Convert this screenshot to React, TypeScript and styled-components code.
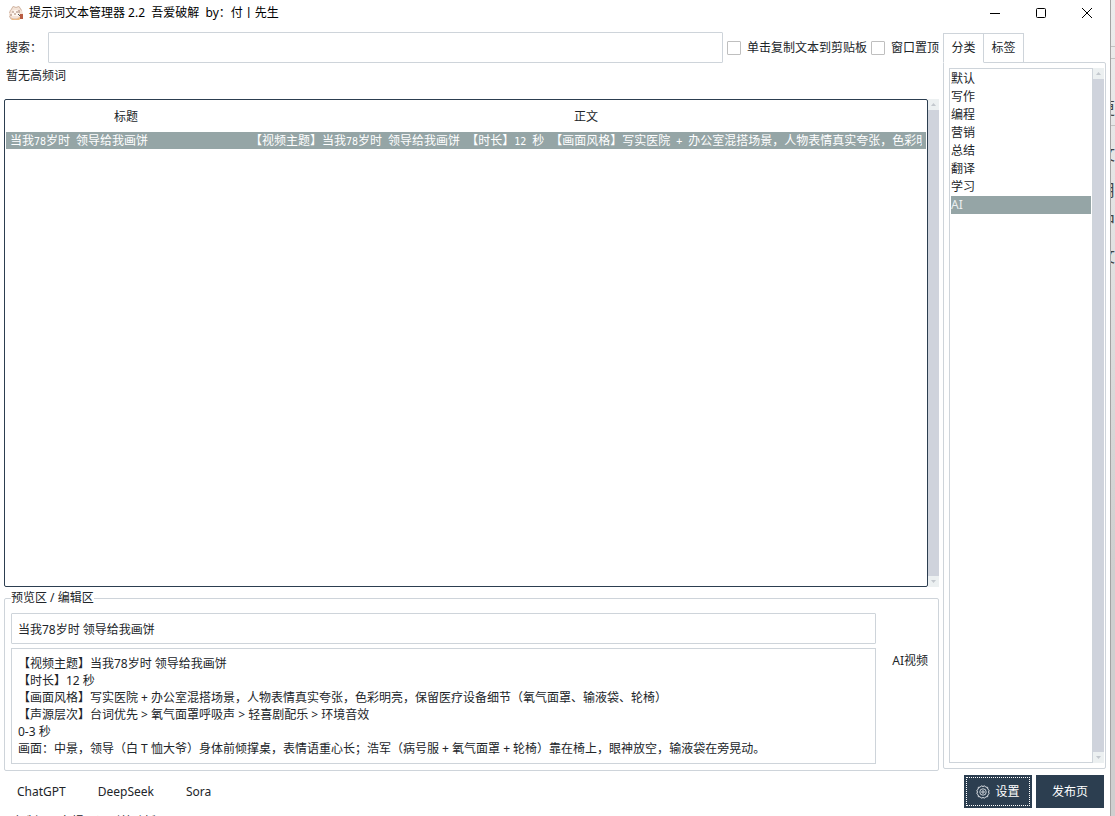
import React, { useState } from 'react';
import styled, { createGlobalStyle, css } from 'styled-components';

const line = '#ced4da';
const navy = '#2c3e50';
const sage = '#95a5a6';
const bar = '#cfd3dc';
const ink = '#212529';

const GlobalStyle = createGlobalStyle`
  * { box-sizing: border-box; }
  body {
    margin: 0;
    background: #fff;
    color: ${ink};
    font: 12px/16px "Noto Sans", "Noto Sans CJK SC", sans-serif;
    text-spacing-trim: space-all;
  }
  button, input, textarea { font: inherit; color: inherit; }
`;

const Page = styled.div`
  display: flex;
  height: 100vh;
  overflow: hidden;
`;

const Window = styled.div`
  flex: 1;
  min-width: 0;
  height: calc(100vh + 16px);
  display: flex;
  flex-direction: column;
  background: #fff;
`;

const Behind = styled.aside`
  width: 5px;
  overflow: hidden;
  border-left: 1px solid #a3a3a3;
  background: linear-gradient(#ececec, #e2e2e2 30%, #cfcfcf 70%, #cfcfcf);
  font-size: 16px;
  color: #444;
`;

const BehindRow = styled.div<{ $height: number; $ruled?: boolean }>`
  display: flex;
  justify-content: flex-end;
  align-items: center;
  height: ${(p) => p.$height}px;
  border-bottom: ${(p) => (p.$ruled ? '1px solid #c2c2c2' : '0')};
`;

const TitleBar = styled.header`
  display: flex;
  align-items: center;
  height: 25px;
  padding-left: 8px;
  color: #000;
`;

const Title = styled.h1`
  flex: 1;
  margin: 0 0 0 5px;
  font-size: 12px;
  font-weight: 400;
  white-space: pre;
`;

const WindowButton = styled.button`
  display: flex;
  align-items: center;
  justify-content: center;
  width: 46px;
  height: 25px;
  padding: 0;
  border: 0;
  background: none;
`;

const Main = styled.main`
  flex: 1;
  min-height: 0;
  display: flex;
  gap: 4px;
  padding: 7px 4px 0;
`;

const Workspace = styled.section`
  flex: 1;
  min-width: 0;
  display: flex;
  flex-direction: column;
`;

const SearchRow = styled.div`
  display: flex;
  align-items: center;
  gap: 4px;
`;

const SearchLabel = styled.label`
  width: 40px;
  padding-left: 2px;
  white-space: nowrap;
`;

const TextField = styled.input`
  flex: 1;
  min-width: 0;
  height: 31px;
  padding: 0 6px;
  border: 1px solid ${line};
  border-radius: 1px;
  background: #fff;
  outline: none;
`;

const TitleField = styled(TextField)`
  flex: none;
`;

const CheckLabel = styled.label`
  display: flex;
  align-items: center;
  gap: 6px;
  white-space: nowrap;
`;

const CheckBox = styled.input`
  appearance: none;
  width: 14px;
  height: 14px;
  margin: 0;
  border: 1px solid #bfbfbf;
  border-radius: 1px;
  background: #fff;
  &:checked { background: ${navy}; }
`;

const Keywords = styled.p`
  margin: 0 0 10px;
  padding-left: 2px;
  line-height: 26px;
`;

const Scrollable = styled.div`
  flex: 1;
  min-height: 0;
  display: flex;
`;

const TableFrame = styled.div`
  flex: 1;
  min-width: 0;
  padding: 1px;
  border: 1px solid ${navy};
  border-radius: 2px;
`;

const Table = styled.table`
  width: 100%;
  table-layout: fixed;
  border-collapse: collapse;
`;

const HeadCell = styled.th<{ $width?: number }>`
  width: ${(p) => (p.$width ? `${p.$width}px` : 'auto')};
  height: 31px;
  padding: 0;
  font-weight: 400;
`;

const Row = styled.tr`
  background: ${sage};
  color: #fff;
`;

const Cell = styled.td`
  height: 17px;
  padding: 0 4px;
  line-height: 17px;
`;

const CellText = styled.span`
  display: block;
  height: 17px;
  overflow: hidden;
  white-space: pre;
`;

const Half = styled.span`
  font-family: "DejaVu Sans Mono", monospace;
  font-size: 10px;
`;

const Track = styled.div`
  width: 11px;
  display: flex;
  flex-direction: column;
  justify-content: space-between;
  background: ${bar};
`;

const TrackButton = styled.button`
  display: flex;
  align-items: center;
  justify-content: center;
  width: 11px;
  height: 11px;
  padding: 0;
  border: 0;
  background: #ecf0f1;
`;

const Preview = styled.fieldset`
  display: flex;
  min-width: 0;
  margin: 3px 0 0;
  padding: 7px 10px 6px 6px;
  border: 1px solid ${line};
  border-radius: 2px;
`;

const Legend = styled.legend`
  padding: 0;
  white-space: pre;
`;

const Editor = styled.div`
  flex: 1;
  min-width: 0;
  display: flex;
  flex-direction: column;
  gap: 4px;
`;

const BodyField = styled.textarea`
  width: 100%;
  height: 116px;
  padding: 6px;
  border: 1px solid ${line};
  line-height: 17px;
  resize: none;
  overflow: hidden;
  outline: none;
`;

const TagName = styled.div`
  padding: 40px 0 0 16px;
`;

const Sidebar = styled.aside`
  width: 163px;
  display: flex;
  flex-direction: column;
  padding: 1px 0 2px;
`;

const Tabs = styled.div`
  display: flex;
`;

const Tab = styled.button<{ $active: boolean }>`
  width: 41px;
  height: 30px;
  margin-bottom: -1px;
  padding: 0;
  border: 1px solid ${line};
  background: #fff;
  white-space: nowrap;
  & + & { margin-left: -1px; }
  ${(p) => p.$active && css`
    border-bottom-color: #fff;
    z-index: 1;
  `}
`;

const TabPanel = styled.div`
  flex: 1;
  min-height: 0;
  display: flex;
  padding: 5px 1px 5px 5px;
  border: 1px solid ${line};
  border-radius: 0 2px 2px 2px;
`;

const Options = styled.div`
  flex: 1;
  padding: 1px;
  border: 1px solid ${line};
`;

const Option = styled.button<{ $selected: boolean }>`
  display: block;
  width: 100%;
  height: 18px;
  padding: 0;
  border: 0;
  text-align: left;
  line-height: 18px;
  background: ${(p) => (p.$selected ? sage : 'transparent')};
  color: ${(p) => (p.$selected ? '#ecf0f1' : ink)};
`;

const Footer = styled.footer`
  display: flex;
  align-items: center;
  gap: 4px;
  padding: 4px 6px 4px 5px;
`;

const Sites = styled.nav`
  flex: 1;
  display: flex;
  gap: 8px;
`;

const SiteButton = styled.button`
  height: 33px;
  padding: 0 12px;
  border: 0;
  background: none;
`;

const Action = styled.button`
  display: flex;
  width: 68px;
  height: 33px;
  padding: 2px;
  border: 0;
  background: ${navy};
  color: #fff;
`;

const ActionFace = styled.span<{ $focus?: boolean }>`
  flex: 1;
  height: 29px;
  display: flex;
  align-items: center;
  justify-content: center;
  gap: 5px;
  border: 1px dotted ${(p) => (p.$focus ? '#fff' : 'transparent')};
  white-space: nowrap;
`;

const Status = styled.div`
  padding-left: 2px;
  line-height: 20px;
  white-space: nowrap;
`;

const AppIcon = () => (
  <svg width="16" height="16" viewBox="0 0 16 16" aria-hidden="true">
    <path d="M3 4 5 1l3 1 3-1 3 4 1 4-1 4-3 2H4l-3-3V8z" fill="#f4e4d8" />
    <path d="M3 5 5 1.500 8 2.500 11 1.500l2.500 4M1.500 8l1-3M1.500 11 3 14h8" fill="none" stroke="#d2b7a6" />
    <path d="M4 7c1-2 5-3 7 0v4H4z" fill="#fff8f0" />
    <path d="M4 7h2M8 7h2M6 9h2M3 9v2M11 5v3" stroke="#a58474" />
    <path d="M3 12c2 3 6 3 8 0l2 1-2 2H4z" fill="#edbb83" />
    <path d="M12 9h3v5h-3z" fill="#b85c42" />
    <path d="M10 9l2 2" stroke="#555" />
  </svg>
);

const Gear = () => (
  <svg width="14" height="14" viewBox="0 0 14 14" fill="none" stroke="#dfe3e8" aria-hidden="true">
    <path d="m5.400.8 1.600.7L8.600.8l1.200 1.400 1.900.1.100 1.900 1.400 1.200L12.500 7l.7 1.600-1.400 1.200-.1 1.900-1.900.1-1.200 1.400-1.600-.7-1.600.7-1.200-1.400-1.900-.1-.1-1.900L.8 8.600 1.500 7 .8 5.400l1.400-1.200.1-1.900 1.900-.1z" />
    <circle cx="7" cy="7" r="3.200" strokeWidth=".9" />
    <circle cx="7" cy="7" r="1.200" />
  </svg>
);

const Scrollbar = () => (
  <Track>
    <TrackButton aria-label="向上滚动">
      <svg width="5" height="3" viewBox="0 0 5 3"><path d="M0 3 2.500 0 5 3z" fill="#c3c8ce" /></svg>
    </TrackButton>
    <TrackButton aria-label="向下滚动">
      <svg width="5" height="3" viewBox="0 0 5 3"><path d="M0 0h5L2.500 3z" fill="#c3c8ce" /></svg>
    </TrackButton>
  </Track>
);

const categories = ['默认', '写作', '编程', '营销', '总结', '翻译', '学习', 'AI'];

const promptTitle = '当我78岁时 领导给我画饼';

const promptBody = `【视频主题】当我78岁时 领导给我画饼
【时长】12 秒
【画面风格】写实医院 + 办公室混搭场景，人物表情真实夸张，色彩明亮，保留医疗设备细节（氧气面罩、输液袋、轮椅）
【声源层次】台词优先 > 氧气面罩呼吸声 > 轻喜剧配乐 > 环境音效
0-3 秒
画面：中景，领导（白 T 恤大爷）身体前倾撑桌，表情语重心长；浩军（病号服 + 氧气面罩 + 轮椅）靠在椅上，眼神放空，输液袋在旁晃动。`;

// ASCII runs in list cells sit on a half-width grid beside the full-width glyphs.
const gridText = (text: string) =>
  text.split(/([\x20-\x7e]+)/).map((part, i) => (i % 2 ? <Half key={i}>{part}</Half> : part));

export default function App() {
  const [tab, setTab] = useState('分类');
  const [category, setCategory] = useState('AI');

  return (
    <>
      <GlobalStyle />
      <Page>
        <Window>
          <TitleBar>
            <AppIcon />
            <Title>{'提示词文本管理器 2.2  吾爱破解  by：付丨先生'}</Title>
            <WindowButton aria-label="最小化">
              <svg width="10" height="10" stroke="#000"><path d="M0 5.500h10" /></svg>
            </WindowButton>
            <WindowButton aria-label="最大化">
              <svg width="10" height="10" fill="none" stroke="#000"><rect x=".5" y=".5" width="9" height="9" rx="1" /></svg>
            </WindowButton>
            <WindowButton aria-label="关闭">
              <svg width="10" height="10" stroke="#000"><path d="M0 0l10 10M10 0 0 10" /></svg>
            </WindowButton>
          </TitleBar>

          <Main>
            <Workspace>
              <SearchRow>
                <SearchLabel htmlFor="search">搜索：</SearchLabel>
                <TextField id="search" type="text" />
                <CheckLabel><CheckBox type="checkbox" />单击复制文本到剪贴板</CheckLabel>
                <CheckLabel><CheckBox type="checkbox" />窗口置顶</CheckLabel>
              </SearchRow>
              <Keywords>暂无高频词</Keywords>

              <Scrollable>
                <TableFrame>
                  <Table>
                    <thead>
                      <tr>
                        <HeadCell $width={240}>标题</HeadCell>
                        <HeadCell>正文</HeadCell>
                      </tr>
                    </thead>
                    <tbody>
                      <Row>
                        <Cell><CellText>{gridText(promptTitle)}</CellText></Cell>
                        <Cell><CellText>{gridText(promptBody.split('\n').slice(0, 3).join(' '))}</CellText></Cell>
                      </Row>
                    </tbody>
                  </Table>
                </TableFrame>
                <Scrollbar />
              </Scrollable>

              <Preview>
                <Legend>预览区 / 编辑区</Legend>
                <Editor>
                  <TitleField type="text" aria-label="标题" defaultValue={promptTitle} />
                  <BodyField aria-label="正文" defaultValue={promptBody} />
                </Editor>
                <TagName>AI视频</TagName>
              </Preview>
            </Workspace>

            <Sidebar>
              <Tabs role="tablist">
                {['分类', '标签'].map((name) => (
                  <Tab key={name} role="tab" aria-selected={tab === name} $active={tab === name} onClick={() => setTab(name)}>
                    {name}
                  </Tab>
                ))}
              </Tabs>
              <TabPanel role="tabpanel">
                <Options role="listbox" aria-label="分类">
                  {categories.map((name) => (
                    <Option key={name} role="option" aria-selected={category === name} $selected={category === name} onClick={() => setCategory(name)}>
                      {name}
                    </Option>
                  ))}
                </Options>
                <Scrollbar />
              </TabPanel>
            </Sidebar>
          </Main>

          <Footer>
            <Sites>
              <SiteButton>ChatGPT</SiteButton>
              <SiteButton>DeepSeek</SiteButton>
              <SiteButton>Sora</SiteButton>
            </Sites>
            <Action><ActionFace $focus><Gear />设置</ActionFace></Action>
            <Action><ActionFace>发布页</ActionFace></Action>
          </Footer>
          <Status>已复制：0 条提示词到剪贴板</Status>
        </Window>

        <Behind aria-hidden="true">
          <BehindRow $height={47} $ruled />
          <BehindRow $height={12} $ruled />
          <BehindRow $height={32} />
          <BehindRow $height={35} $ruled>更</BehindRow>
          <BehindRow $height={56}>文</BehindRow>
          <BehindRow $height={16}>用</BehindRow>
          <BehindRow $height={44}>中</BehindRow>
          <BehindRow $height={28}>文</BehindRow>
        </Behind>
      </Page>
    </>
  );
}
